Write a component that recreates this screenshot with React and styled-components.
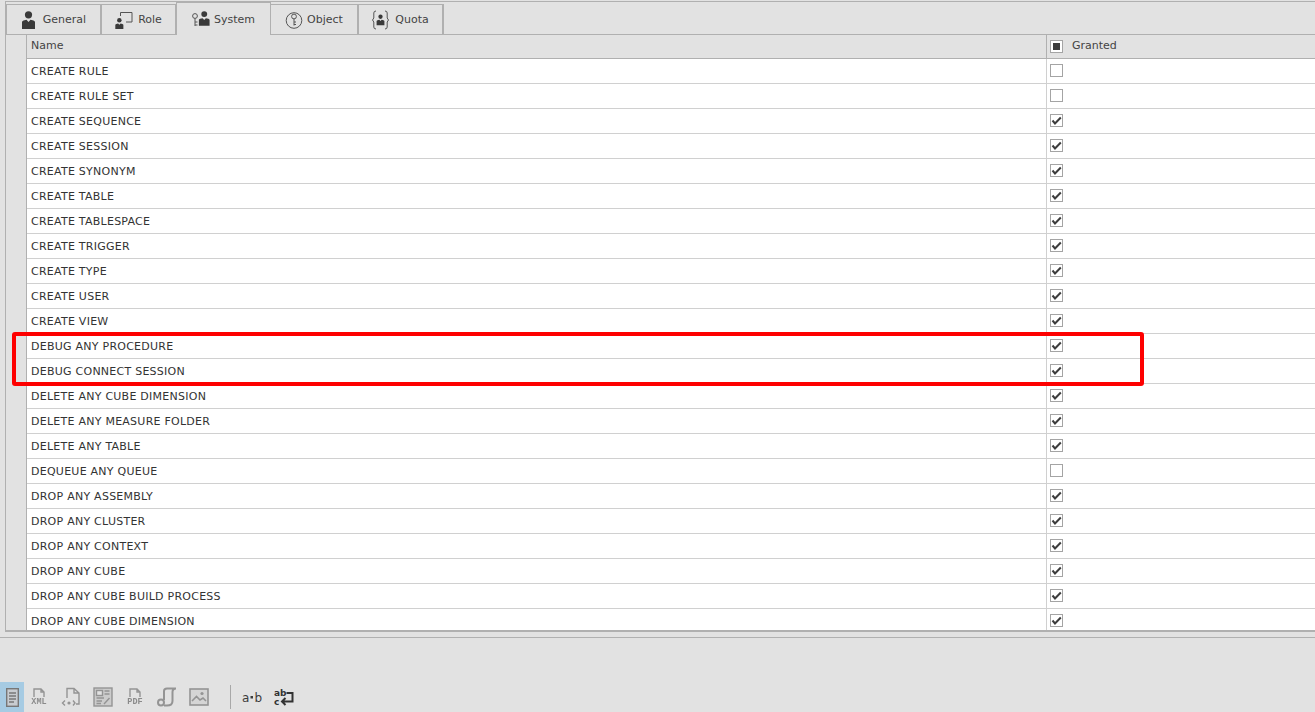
import React from "react";
import styled, { createGlobalStyle } from "styled-components";

const rows = [
  ["CREATE RULE", false],
  ["CREATE RULE SET", false],
  ["CREATE SEQUENCE", true],
  ["CREATE SESSION", true],
  ["CREATE SYNONYM", true],
  ["CREATE TABLE", true],
  ["CREATE TABLESPACE", true],
  ["CREATE TRIGGER", true],
  ["CREATE TYPE", true],
  ["CREATE USER", true],
  ["CREATE VIEW", true],
  ["DEBUG ANY PROCEDURE", true],
  ["DEBUG CONNECT SESSION", true],
  ["DELETE ANY CUBE DIMENSION", true],
  ["DELETE ANY MEASURE FOLDER", true],
  ["DELETE ANY TABLE", true],
  ["DEQUEUE ANY QUEUE", false],
  ["DROP ANY ASSEMBLY", true],
  ["DROP ANY CLUSTER", true],
  ["DROP ANY CONTEXT", true],
  ["DROP ANY CUBE", true],
  ["DROP ANY CUBE BUILD PROCESS", true],
  ["DROP ANY CUBE DIMENSION", true],
];

const GlobalStyle = createGlobalStyle`
  html, body { margin: 0; padding: 0; height: 100%; overflow: hidden; background: #e2e2e2; }
  body { font-family: "DejaVu Sans", "Liberation Sans", sans-serif; font-size: 11px; color: #333; }
`;

const Page = styled.div`
  position: relative;
  width: 1315px;
  height: 712px;
  display: flex;
  flex-direction: column;
  padding-left: 5px;
  box-sizing: border-box;
  background: #e2e2e2;
`;
const TabBar = styled.div`
  height: 33px;
  margin-top: 1px;
  box-sizing: border-box;
  border-top: 1px solid #b0b0b0;
  border-left: 1px solid #b0b0b0;
  display: flex;
  align-items: flex-end;
`;
const Tab = styled.div`
  width: ${(p) => p.$w}px;
  height: 30px;
  box-sizing: border-box;
  display: flex;
  align-items: center;
  justify-content: center;
  gap: ${(p) => p.$gap ?? 4}px;
  border-top: 1px solid #b0b0b0;
  border-right: 2px solid #b0b0b0;
  background: #e2e2e2;
  color: #444;
  &:first-child { border-left: 1px solid #b0b0b0; }
`;
const ActiveTab = styled(Tab)`
  height: 33px;
  margin: 0 0 -1px -1px;
  border-left: 1px solid #b0b0b0;
  border-right: 1px solid #b0b0b0;
  border-top: 1px solid #b0b0b0;
  position: relative;
  z-index: 1;
`;
const Grid = styled.div`
  height: 598px;
  overflow: hidden;
  box-sizing: border-box;
  border-top: 1px solid #b0b0b0;
  border-bottom: 2px solid #b0b0b0;
  border-left: 1px solid #b0b0b0;
  background: #fff;
`;
const Row = styled.div`
  display: grid;
  grid-template-columns: 21px 1020px 1fr;
  height: 25px;
  box-sizing: border-box;
  border-bottom: 1px solid #d0d0d0;
`;
const HeaderRow = styled(Row)`
  height: 24px;
  background: #e2e2e2;
  border-bottom: 1px solid #b0b0b0;
`;
const Gutter = styled.div`
  background: #e2e2e2;
  border-right: 1px solid #b0b0b0;
  margin-bottom: -1px;
`;
const NameCell = styled.div`
  display: flex;
  align-items: center;
  padding-left: 4px;
  border-right: 1px solid #d0d0d0;
  margin-bottom: -1px;
  white-space: nowrap;
  letter-spacing: 0.25px;
`;
const HeaderName = styled(NameCell)`
  border-right-color: #b0b0b0;
  margin-bottom: 0;
  padding-bottom: 2px;
  color: #444;
  letter-spacing: 0;
`;
const CheckCell = styled.div`
  display: flex;
  align-items: center;
  padding: 0 0 1px 3px;
`;
const HeaderCheckCell = styled(CheckCell)`
  padding-bottom: 0;
  gap: 9px;
`;
const HeaderLabel = styled.span`
  color: #444;
  margin-bottom: 2px;
`;
const Box = styled.div`
  width: 13px;
  height: 13px;
  box-sizing: border-box;
  border: 1px solid #a4a4a4;
  background: #fff;
  display: flex;
  align-items: center;
  justify-content: center;
`;
const Square = styled.span`
  width: 7px;
  height: 7px;
  background: #3c3c3c;
`;
const Spacer = styled.div`
  height: 5px;
  border-bottom: 1px solid #b0b0b0;
  margin-left: -5px;
`;
const BottomArea = styled.div`
  flex: 1;
  display: flex;
  align-items: flex-end;
  margin-left: -5px;
`;
const Toolbar = styled.div`
  height: 30px;
  display: flex;
  align-items: center;
`;
const ToolButton = styled.div`
  width: 24px;
  height: 30px;
  margin-right: ${(p) => p.$gap ?? 8}px;
  display: flex;
  align-items: center;
  justify-content: center;
  background: ${(p) => (p.$active ? "#a6cbe3" : "transparent")};
  flex-shrink: 0;
`;
const DimTool = styled(ToolButton)`
  opacity: 0.55;
  filter: blur(0.6px);
`;
const ActiveTool = styled(DimTool)`
  opacity: 1;
  margin-right: 3px;
`;
const Divider = styled.div`
  width: 1px;
  height: 24px;
  background: #a8a8a8;
  margin: 0 9px 0 19px;
`;
const Mark = styled.div`
  position: absolute;
  left: 12px;
  top: 332px;
  width: 1132px;
  height: 54px;
  box-sizing: border-box;
  border: 4px solid #fe0000;
  border-radius: 3px;
  pointer-events: none;
`;

const Check = () => (
  <svg width="11" height="11" viewBox="0 0 11 11">
    <path d="M1.5 5.5 L4 8.5 L9.8 2.5" fill="none" stroke="#3c3c3c" strokeWidth="2" />
  </svg>
);

const Person = ({ x = 0, y = 0 }) => (
  <g transform={`translate(${x} ${y})`} fill="#3a3a3a">
    <circle cx="7" cy="3.8" r="3.6" />
    <path d="M0.5 18 V11 Q0.5 10 2 9.5 L5 8.7 L7 11 L9 8.7 L12 9.5 Q13.5 10 13.5 11 V18 Z" />
  </g>
);

const GeneralIcon = () => (
  <svg width="15" height="18" viewBox="0 0 15 18"><Person x="0.5" /></svg>
);
const RoleIcon = () => (
  <svg width="18" height="18" viewBox="0 0 18 18">
    <g transform="translate(0 7) scale(0.62)"><Person /></g>
    <path d="M5.5 5 V1.5 H17 V11 H11" fill="none" stroke="#555" />
  </svg>
);
const SystemIcon = () => (
  <svg width="18" height="18" viewBox="0 0 18 18">
    <circle cx="3" cy="6" r="2.4" fill="none" stroke="#555" />
    <path d="M3 8.4 V16 M3 12 H5.5 M3 15 H5.5" fill="none" stroke="#555" />
    <g transform="translate(6.5 1) scale(0.82)"><Person /></g>
  </svg>
);
const ObjectIcon = () => (
  <svg width="18" height="18" viewBox="0 0 18 18" fill="none" stroke="#555">
    <circle cx="9" cy="9.5" r="7.8" />
    <circle cx="9" cy="5.5" r="2.4" fill="#e2e2e2" />
    <path d="M9 8 V14.5 M9 11 H11 M9 13.5 H11" />
  </svg>
);
const QuotaIcon = () => (
  <svg width="17" height="20" viewBox="0 0 17 20">
    <path d="M4 1 Q1.8 1 1.8 3 V8 L0.5 10 L1.8 12 V17 Q1.8 19 4 19 M13 1 Q15.2 1 15.2 3 V8 L16.5 10 L15.2 12 V17 Q15.2 19 13 19" fill="none" stroke="#555" />
    <g transform="translate(4.3 4.5) scale(0.6)"><Person /></g>
  </svg>
);

const DocIcon = () => (
  <svg width="13" height="19" viewBox="0 0 13 19" fill="none" stroke="#777" strokeWidth="1.4">
    <rect x="0.7" y="0.7" width="11.6" height="17.6" fill="#c8ccd0" />
    <path d="M3 5 H10 M3 8 H10 M3 11 H10 M3 14 H8" />
  </svg>
);
const FileBadge = ({ label }) => (
  <svg width="20" height="20" viewBox="0 0 20 20">
    <path d="M5 10 V2 H12 L15 5 V10 M12 2 V5 H15" fill="none" stroke="#555" strokeWidth="1.4" />
    <text x="10" y="17" textAnchor="middle" fontSize="8.5" fontWeight="700" fontFamily="Liberation Mono, monospace" fill="#444">{label}</text>
  </svg>
);
const CodeIcon = () => (
  <svg width="20" height="20" viewBox="0 0 20 20" fill="none" stroke="#555" strokeWidth="1.4">
    <path d="M6 11 V1.5 H13 L18 6 V17 H15 M13 1.5 V6 H18" />
    <path d="M4 13.5 L1.5 16 L4 18.5 M12 13.5 L14 16 L12 18.5" />
    <circle cx="8" cy="16" r="1.6" fill="#555" stroke="none" />
  </svg>
);
const ReportIcon = () => (
  <svg width="20" height="20" viewBox="0 0 20 20" fill="none" stroke="#555" strokeWidth="1.4">
    <rect x="1" y="1" width="18" height="18" fill="#bbb" />
    <rect x="3.5" y="3.5" width="6" height="5" fill="#e2e2e2" />
    <path d="M11.5 4 H16.5 M11.5 7 H16.5 M3.5 11 H11 M3.5 14 H9 M3.5 16.5 H8 M11 17 L16.5 11" />
  </svg>
);
const ScrollIcon = () => (
  <svg width="20" height="20" viewBox="0 0 20 20" fill="none" stroke="#555" strokeWidth="2">
    <path d="M7 13 V4 Q7 1.5 10 1.5 H19 Q15.5 1.5 15.5 5 V14 Q15.5 18.5 10 18.5 H7" />
    <circle cx="4" cy="15.5" r="3" />
  </svg>
);
const ImageIcon = () => (
  <svg width="20" height="18" viewBox="0 0 20 18" fill="none" stroke="#555" strokeWidth="1.6">
    <rect x="1" y="1" width="18" height="16" fill="#ccc" />
    <path d="M3 13 L7.5 8.5 L11 12 L14 10 L17 13" />
    <circle cx="13" cy="5.5" r="1.6" fill="#555" stroke="none" />
  </svg>
);
const SpaceIcon = () => (
  <svg width="20" height="14" viewBox="0 0 20 14">
    <text x="0" y="11.5" fontSize="12" fontFamily="DejaVu Sans, sans-serif" fill="#3c3c3c">a</text>
    <rect x="8.5" y="6" width="2.5" height="2.5" fill="#3c3c3c" />
    <text x="12.5" y="11.5" fontSize="12" fontFamily="DejaVu Sans, sans-serif" fill="#3c3c3c">b</text>
  </svg>
);
const WrapIcon = () => (
  <svg width="20" height="18" viewBox="0 0 20 18">
    <text x="0" y="8" fontSize="9" fontWeight="700" fontFamily="DejaVu Sans, sans-serif" fill="#333">ab</text>
    <text x="0" y="16.5" fontSize="9" fontWeight="700" fontFamily="DejaVu Sans, sans-serif" fill="#333">c</text>
    <path d="M12.5 5 H18.5 V13.5 H8 M11.5 10 L8 13.5 L11.5 17" fill="none" stroke="#333" strokeWidth="2" />
  </svg>
);

const App = () => (
  <Page>
    <GlobalStyle />
    <TabBar>
      <Tab $w={96} $gap={7}><GeneralIcon />General</Tab>
      <Tab $w={75} $gap={5}><RoleIcon />Role</Tab>
      <ActiveTab $w={95}><SystemIcon />System</ActiveTab>
      <Tab $w={88}><ObjectIcon />Object</Tab>
      <Tab $w={85} $gap={6}><QuotaIcon />Quota</Tab>
    </TabBar>
    <Grid>
      <HeaderRow>
        <Gutter />
        <HeaderName>Name</HeaderName>
        <HeaderCheckCell><Box><Square /></Box><HeaderLabel>Granted</HeaderLabel></HeaderCheckCell>
      </HeaderRow>
      {rows.map(([name, granted]) => (
        <Row key={name}>
          <Gutter />
          <NameCell>{name}</NameCell>
          <CheckCell><Box>{granted && <Check />}</Box></CheckCell>
        </Row>
      ))}
    </Grid>
    <Spacer />
    <BottomArea>
      <Toolbar>
        <ActiveTool $active><DocIcon /></ActiveTool>
        <DimTool><FileBadge label="XML" /></DimTool>
        <DimTool><CodeIcon /></DimTool>
        <DimTool><ReportIcon /></DimTool>
        <DimTool><FileBadge label="PDF" /></DimTool>
        <DimTool><ScrollIcon /></DimTool>
        <DimTool $gap={0}><ImageIcon /></DimTool>
        <Divider />
        <ToolButton><SpaceIcon /></ToolButton>
        <ToolButton><WrapIcon /></ToolButton>
      </Toolbar>
    </BottomArea>
    <Mark />
  </Page>
);

export default App;
